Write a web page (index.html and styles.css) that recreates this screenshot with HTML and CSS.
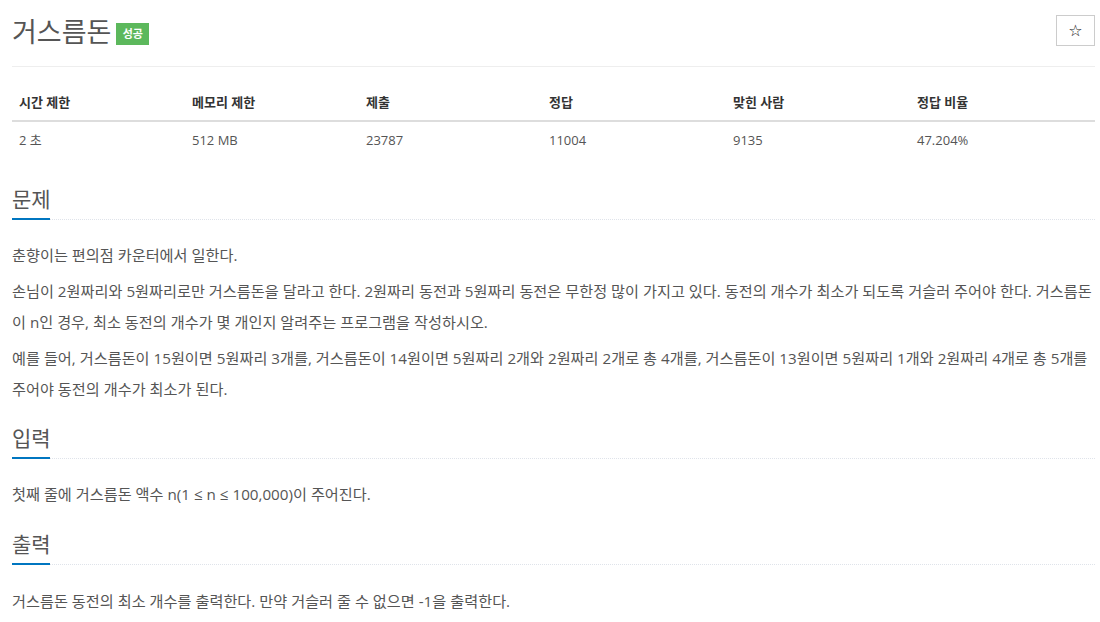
FILE: index.html
```html
<!DOCTYPE html>
<html lang="ko">
<head>
<meta charset="utf-8">
<title>거스름돈</title>
<link rel="stylesheet" href="styles.css">
</head>
<body>
<div class="page">
  <div class="page-header">
    <h1 class="title">거스름돈 <span class="badge">성공</span></h1>
    <button class="star-btn" type="button">☆</button>
  </div>

  <table class="info">
    <thead>
      <tr>
        <th class="c1">시간 제한</th>
        <th class="c2">메모리 제한</th>
        <th class="c3">제출</th>
        <th class="c4">정답</th>
        <th class="c5">맞힌 사람</th>
        <th class="c6">정답 비율</th>
      </tr>
    </thead>
    <tbody>
      <tr>
        <td>2 초</td>
        <td>512 MB</td>
        <td>23787</td>
        <td>11004</td>
        <td>9135</td>
        <td>47.204%</td>
      </tr>
    </tbody>
  </table>

  <section class="section first">
    <div class="headline"><h2>문제</h2></div>
    <div class="text">
      <p>춘향이는 편의점 카운터에서 일한다.</p>
      <p>손님이 2원짜리와 5원짜리로만 거스름돈을 달라고 한다. 2원짜리 동전과 5원짜리 동전은 무한정 많이 가지고 있다. 동전의 개수가 최소가 되도록 거슬러 주어야 한다. 거스름돈이 n인 경우, 최소 동전의 개수가 몇 개인지 알려주는 프로그램을 작성하시오.</p>
      <p>예를 들어, 거스름돈이 15원이면 5원짜리 3개를, 거스름돈이 14원이면 5원짜리 2개와 2원짜리 2개로 총 4개를, 거스름돈이 13원이면 5원짜리 1개와 2원짜리 4개로 총 5개를 주어야 동전의 개수가 최소가 된다.</p>
    </div>
  </section>

  <section class="section">
    <div class="headline"><h2>입력</h2></div>
    <div class="text">
      <p>첫째 줄에 거스름돈 액수 n(1 ≤ n ≤ 100,000)이 주어진다.</p>
    </div>
  </section>

  <section class="section last">
    <div class="headline"><h2>출력</h2></div>
    <div class="text">
      <p>거스름돈 동전의 최소 개수를 출력한다. 만약 거슬러 줄 수 없으면 -1을 출력한다.</p>
    </div>
  </section>
</div>
</body>
</html>
```

FILE: styles.css
```css
* { box-sizing: border-box; }

html, body {
  margin: 0;
  padding: 0;
  background: #fff;
}

body {
  font-family: "Open Sans", "Noto Sans CJK KR", sans-serif;
  font-size: 15px;
  color: #555;
}

.page {
  padding: 0 5px 0 12px;
}

.page-header {
  display: flex;
  justify-content: space-between;
  align-items: flex-start;
  padding-top: 12px;
  padding-bottom: 14px;
  border-bottom: 1px solid #eee;
}

.title {
  margin: 0;
  font-size: 27px;
  line-height: 40px;
  font-weight: 400;
  color: #555;
  display: flex;
  align-items: center;
}

.badge {
  display: inline-block;
  margin-left: 5px;
  margin-top: 4px;
  width: 33px;
  height: 22px;
  line-height: 22px;
  text-align: center;
  background: #5cb85c;
  color: #fff;
  font-size: 11px;
  font-weight: 700;
}

.star-btn {
  margin-top: 3px;
  width: 39px;
  height: 31px;
  padding: 0;
  border: 1px solid #ccc;
  background: #fff;
  color: #222;
  font-size: 16px;
  line-height: 29px;
  font-family: "DejaVu Sans", sans-serif;
}

.info {
  margin-top: 17px;
  width: 100%;
  border-collapse: collapse;
  font-size: 13px;
  line-height: 20px;
}

.info th, .info td {
  text-align: left;
  padding: 8px 7px;
}

.info th {
  color: #333;
  font-weight: 700;
  border-bottom: 2px solid #ddd;
}

.info td {
  color: #555;
}

.c1 { width: 173px; }
.c2 { width: 174px; }
.c3 { width: 183px; }
.c4 { width: 184px; }
.c5 { width: 184px; }

.section {
  margin-top: 18px;
}

.section.first {
  margin-top: 26px;
}

.section.last {
  margin-top: 19px;
}

.headline {
  border-bottom: 1px dotted #dfe3ea;
}

.headline h2 {
  display: inline-block;
  margin: 0 0 -1px 0;
  padding-bottom: 4px;
  font-size: 21px;
  line-height: 30px;
  font-weight: 400;
  color: #555;
  border-bottom: 2px solid #0076c0;
  width: 38px;
  white-space: nowrap;
}

.text {
  margin-top: 20px;
  font-size: 15.2px;
}

.last .text {
  margin-top: 21px;
}

.text p {
  margin: 0 0 5px 0;
  line-height: 31px;
}
```
